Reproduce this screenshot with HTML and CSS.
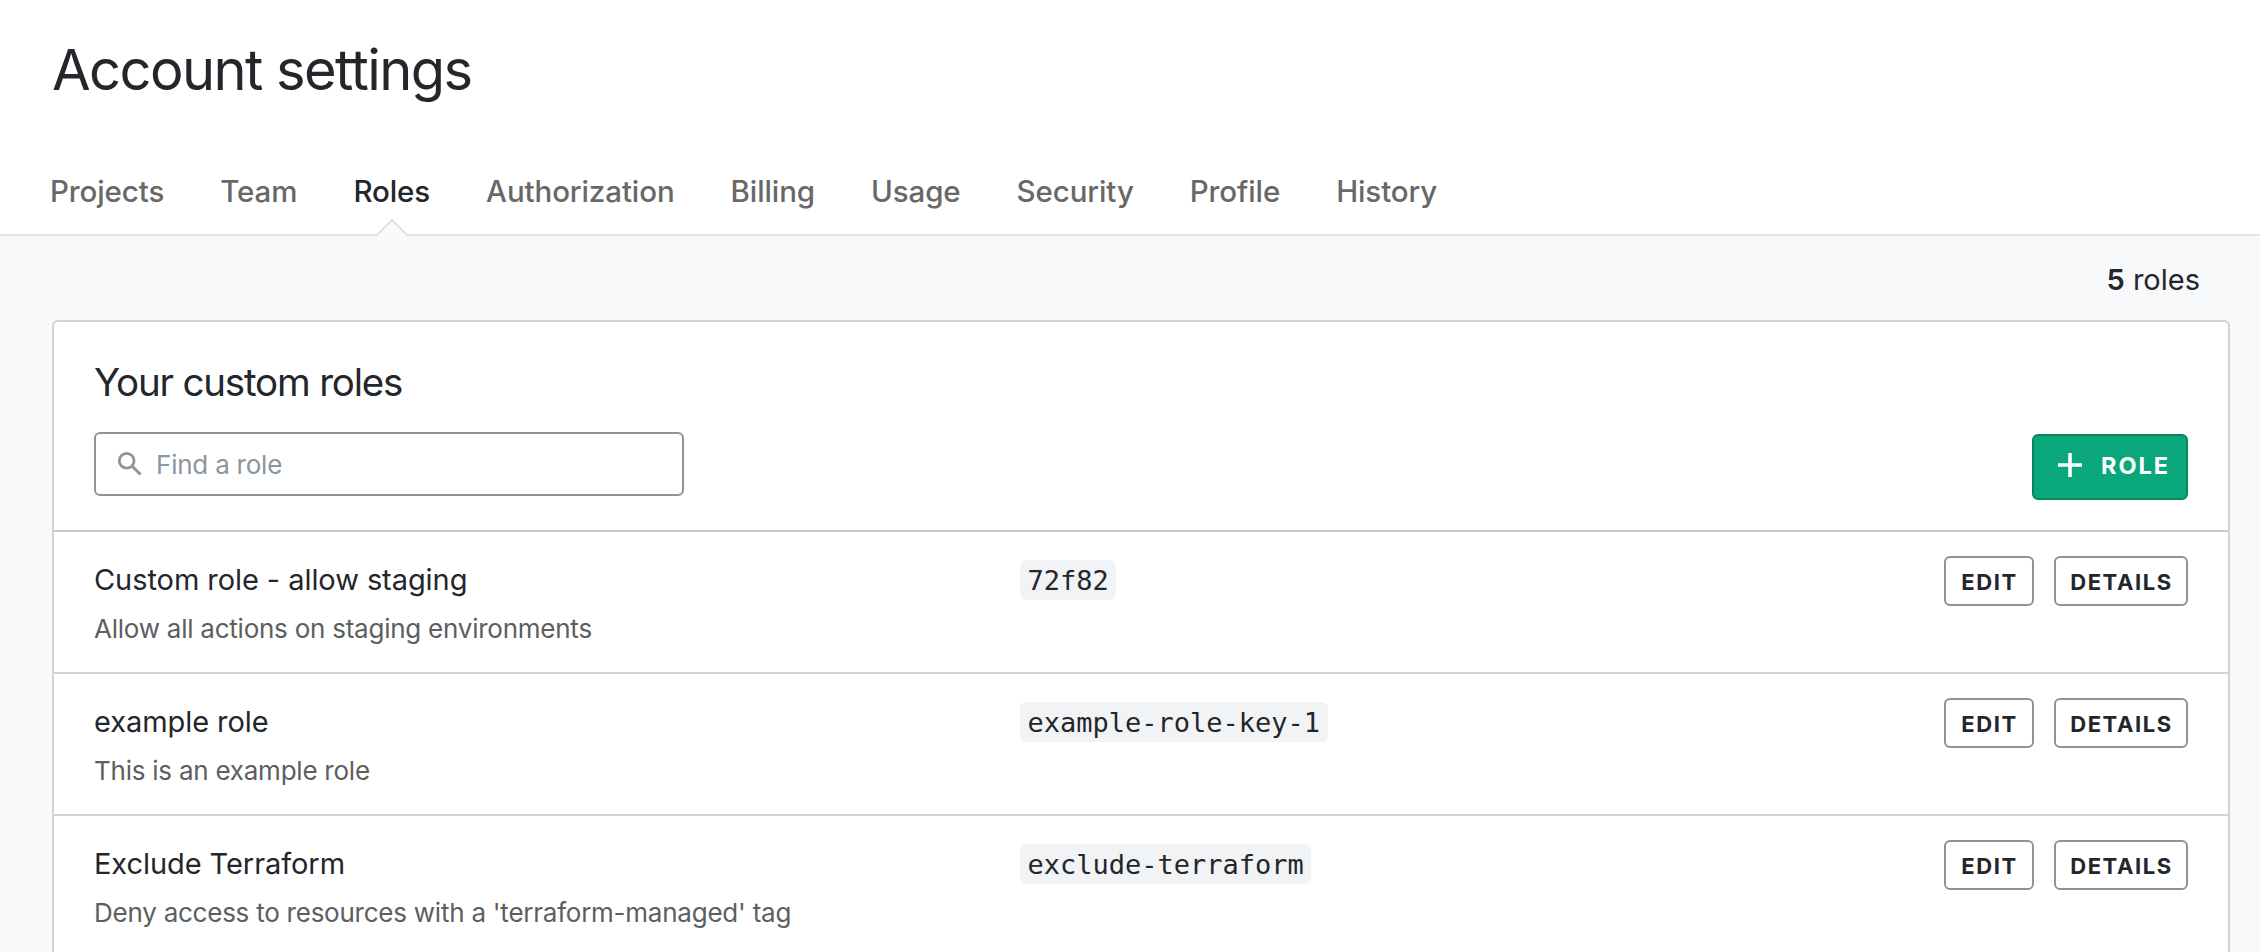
FILE: index.html
```html
<!DOCTYPE html>
<html lang="en">
<head>
<meta charset="utf-8">
<title>Account settings</title>
<link rel="stylesheet" href="styles.css">
</head>
<body>
<header class="header">
  <h1 class="title">Account settings</h1>
  <nav class="tabs">
    <a class="tab">Projects</a>
    <a class="tab">Team</a>
    <a class="tab tab-active">Roles<svg class="caret" width="36" height="20" viewBox="0 0 36 20"><path d="M1 20 L18 2 L35 20Z" fill="#fafafa"/><path d="M1.5 18.500 L18 2 L34.500 18.500" fill="none" stroke="#e3e4e5" stroke-width="2"/></svg></a>
    <a class="tab">Authorization</a>
    <a class="tab">Billing</a>
    <a class="tab">Usage</a>
    <a class="tab">Security</a>
    <a class="tab">Profile</a>
    <a class="tab">History</a>
  </nav>
</header>
<main class="main">
  <p class="count"><b>5</b> roles</p>
  <section class="card">
    <div class="card-head">
      <div>
        <h2 class="card-title">Your custom roles</h2>
        <div class="search">
          <svg width="26" height="26" viewBox="0 0 26 26" fill="none" stroke="#8b959e"><circle cx="9.700" cy="9.700" r="7.400" stroke-width="2.800"/><path d="M15 15 L23.500 23.500" stroke-width="3"/></svg>
          <span class="placeholder">Find a role</span>
        </div>
      </div>
      <button class="add"><svg width="24" height="24" viewBox="0 0 24 24"><path d="M12 0V24M0 12H24" stroke="#fff" stroke-width="3.600"/></svg><span class="add-label">ROLE</span></button>
    </div>
    <div class="row">
      <div class="info"><div class="name">Custom role - allow staging</div><div class="desc">Allow all actions on staging environments</div></div>
      <div class="key"><code>72f82</code></div>
      <div class="actions"><button class="btn edit">EDIT</button><button class="btn details">DETAILS</button></div>
    </div>
    <div class="row">
      <div class="info"><div class="name">example role</div><div class="desc">This is an example role</div></div>
      <div class="key"><code>example-role-key-1</code></div>
      <div class="actions"><button class="btn edit">EDIT</button><button class="btn details">DETAILS</button></div>
    </div>
    <div class="row">
      <div class="info"><div class="name">Exclude Terraform</div><div class="desc">Deny access to resources with a 'terraform-managed' tag</div></div>
      <div class="key"><code>exclude-terraform</code></div>
      <div class="actions"><button class="btn edit">EDIT</button><button class="btn details">DETAILS</button></div>
    </div>
  </section>
</main>
</body>
</html>
```
FILE: styles.css
```css
* { box-sizing: border-box; }
body { margin: 0; height: 952px; overflow: hidden; background: #f7f9fb; color: #23262b; font-family: Inter, "Liberation Sans", sans-serif; }
.header { height: 236px; background: #fff; border-bottom: 2px solid #e3e4e5; padding-top: 30px; }
.title { margin: 0 0 0 52px; height: 80px; line-height: 80px; font-size: 56px; font-weight: 400; letter-spacing: -1.560px; white-space: nowrap; }
.tabs { display: flex; gap: 56px; margin: 61px 0 0 50px; }
.tab { position: relative; height: 65px; line-height: 40px; font-size: 29.500px; font-weight: 500; color: #686868; letter-spacing: -0.1px; white-space: nowrap; }
.tab-active { color: #23262b; }
.caret { position: absolute; left: 50%; margin-left: -18px; bottom: -2px; }
.main { padding: 0 30px 0 52px; }
.count { margin: 0; height: 84px; padding: 24px 30px 0 0; line-height: 40px; font-size: 29px; text-align: right; }
.count b { font-weight: 600; }
.card { height: 632px; overflow: hidden; background: #fff; border: 2px solid #cfd4d9; border-bottom: 0; border-radius: 6px 6px 0 0; }
.card-head { height: 210px; padding: 32px 40px 0; border-bottom: 2px solid #ccc; display: flex; justify-content: space-between; }
.card-title { margin: 0; height: 78px; line-height: 57px; font-size: 38.500px; font-weight: 400; letter-spacing: -1.180px; white-space: nowrap; }
.search { width: 590px; height: 64px; border: 2px solid #8a939e; border-radius: 6px; display: flex; align-items: center; padding-left: 21px; gap: 13px; }
.placeholder { padding-top: 2px; color: #8b959e; font-size: 26px; line-height: 32px; letter-spacing: -0.220px; }
.add { width: 156px; height: 66px; margin: 80px 0 0; padding: 0 0 4px 24px; border: 2px solid #08875f; border-radius: 6px; background: #09a77b; color: #fff; display: flex; align-items: center; gap: 19px; font: 700 23.500px/30px Inter, sans-serif; letter-spacing: 2px; }
.add-label { padding-top: 2px; }
.row { height: 142px; padding: 24px 40px 0; border-bottom: 2px solid #cfd4d9; display: flex; }
.info { width: 926px; }
.name { line-height: 48px; font-size: 29px; letter-spacing: -0.070px; white-space: nowrap; }
.desc { line-height: 50px; font-size: 26px; letter-spacing: -0.240px; color: #5c5e60; white-space: nowrap; }
.key { flex: 1; padding-top: 4px; }
code { display: inline-block; height: 40px; line-height: 41px; padding: 0 7.500px; border-radius: 6px; background: #f2f3f5; font-family: "DejaVu Sans Mono", monospace; font-size: 27px; }
.actions { display: flex; gap: 20px; }
.btn { height: 50px; padding: 2px 0 0 1px; border: 2px solid #8a939e; border-radius: 6px; background: #fff; color: #23262b; font: 700 22px/28px Inter, sans-serif; letter-spacing: 1.600px; }
.edit { width: 90px; }
.details { width: 134px; }
```
